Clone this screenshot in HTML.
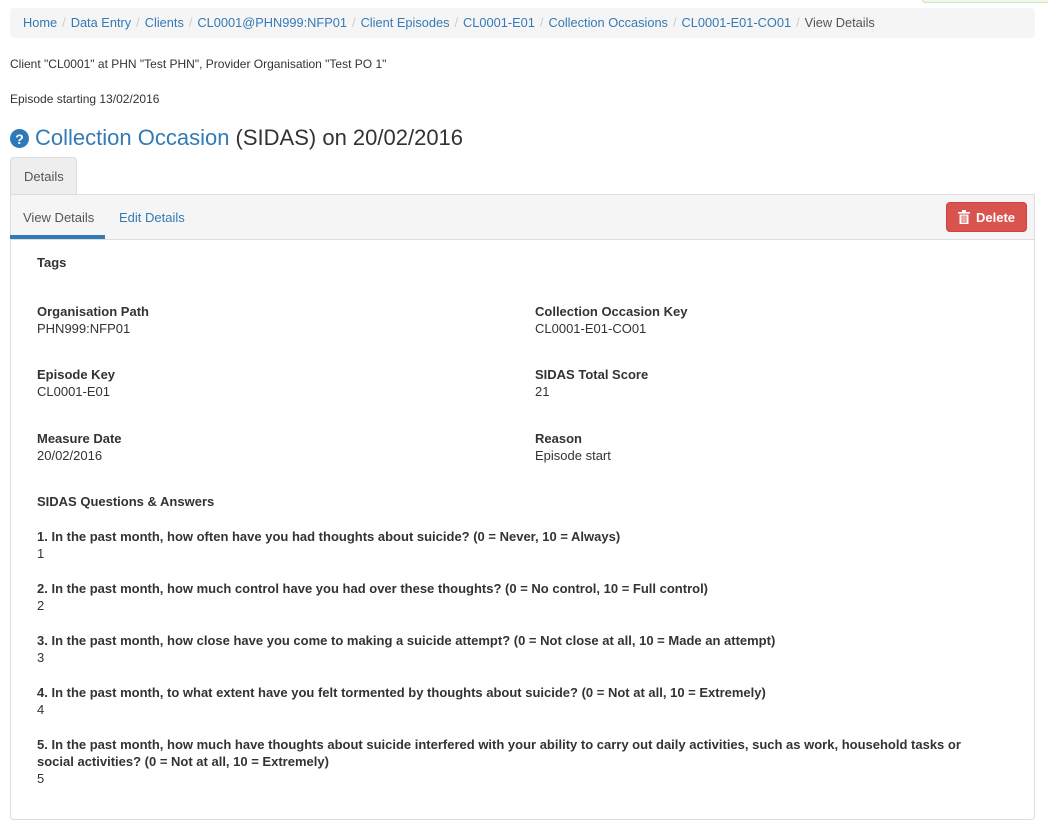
<!DOCTYPE html>
<html><head><meta charset="utf-8"><style>
*{box-sizing:border-box;margin:0;padding:0}
body{width:1048px;height:830px;background:#fff;font-family:"Liberation Sans",sans-serif;font-size:13px;color:#333;position:relative;overflow:hidden}
.a{position:absolute;white-space:nowrap}
.bc{left:10px;top:8px;width:1025px;height:30px;background:#f5f5f5;border-radius:4px;padding:7px 13px;font-size:12.8px;color:#555}
.bc a{color:#337ab7;text-decoration:none}
.bc .s{color:#ccc;padding:0 5px}
.green{left:922px;top:-4px;width:140px;height:7px;border:1px solid #cfe6bf;background:#eef7e8;border-radius:4px}
h1{font-weight:normal;font-size:22px;color:#333}
h1 span{color:#337ab7}
.q{left:10px;top:129px;width:19px;height:19px;border-radius:50%;background:#2e7ab8;color:#fff;font-weight:bold;font-size:14px;text-align:center;line-height:20px}
.tab{left:10px;top:157px;width:67px;height:38px;background:#eee;border:1px solid #ddd;border-bottom:none;border-radius:4px 4px 0 0;padding:11px 13px;color:#555}
.panel{left:10px;top:194px;width:1025px;height:626px;border:1px solid #ddd;border-radius:0 0 4px 4px}
.ph{left:11px;top:195px;width:1023px;height:45px;background:#f5f5f5;border-bottom:1px solid #ddd}
.ul{left:10px;top:235px;width:95px;height:4px;background:#337ab7}
.del{left:946px;top:202px;width:81px;height:30px;background:#d9534f;border:1px solid #d43f3a;border-radius:4px;color:#fff;font-weight:bold;padding:7px 0 0 11px;font-size:13px}
b{font-weight:bold;color:#333}
</style></head><body>
<div class="a green"></div>
<div class="a bc"><a>Home</a><span class="s">/</span><a>Data Entry</a><span class="s">/</span><a>Clients</a><span class="s">/</span><a>CL0001@PHN999:NFP01</a><span class="s">/</span><a>Client Episodes</a><span class="s">/</span><a>CL0001-E01</a><span class="s">/</span><a>Collection Occasions</a><span class="s">/</span><a>CL0001-E01-CO01</a><span class="s">/</span>View Details</div>
<div class="a" style="left:10px;top:57px;font-size:12px">Client "CL0001" at PHN "Test PHN", Provider Organisation "Test PO 1"</div>
<div class="a" style="left:10px;top:92px;font-size:12px">Episode starting 13/02/2016</div>
<div class="a q">?</div>
<h1 class="a" style="left:35px;top:125px"><span>Collection Occasion</span> (SIDAS) on 20/02/2016</h1>
<div class="a tab">Details</div>
<div class="a panel"></div>
<div class="a ph"></div>
<div class="a" style="left:23px;top:210px;color:#555">View Details</div>
<div class="a" style="left:119px;top:210px;color:#337ab7">Edit Details</div>
<div class="a ul"></div>
<div class="a del"><svg width="12" height="14" viewBox="0 0 12 14" style="vertical-align:-2px;margin-right:6px"><rect x="0" y="2" width="12" height="1.6" fill="#fff"/><rect x="4" y="0" width="4" height="2" fill="#fff"/><rect x="1.5" y="4.5" width="9" height="9.5" fill="#fff"/><rect x="3.6" y="5.5" width="1" height="7.5" fill="#d9534f"/><rect x="5.5" y="5.5" width="1" height="7.5" fill="#d9534f"/><rect x="7.4" y="5.5" width="1" height="7.5" fill="#d9534f"/></svg>Delete</div>
<div class="a" style="left:37px;top:255px"><b>Tags</b></div>
<div class="a" style="left:37px;top:303px;line-height:17px"><b>Organisation Path</b><br>PHN999:NFP01</div>
<div class="a" style="left:535px;top:303px;line-height:17px"><b>Collection Occasion Key</b><br>CL0001-E01-CO01</div>
<div class="a" style="left:37px;top:366px;line-height:17px"><b>Episode Key</b><br>CL0001-E01</div>
<div class="a" style="left:535px;top:366px;line-height:17px"><b>SIDAS Total Score</b><br>21</div>
<div class="a" style="left:37px;top:430px;line-height:17px"><b>Measure Date</b><br>20/02/2016</div>
<div class="a" style="left:535px;top:430px;line-height:17px"><b>Reason</b><br>Episode start</div>
<div class="a" style="left:37px;top:494px"><b>SIDAS Questions &amp; Answers</b></div>
<div class="a" style="left:37px;top:528px;line-height:17px"><b>1. In the past month, how often have you had thoughts about suicide? (0 = Never, 10 = Always)</b><br>1</div>
<div class="a" style="left:37px;top:580px;line-height:17px"><b>2. In the past month, how much control have you had over these thoughts? (0 = No control, 10 = Full control)</b><br>2</div>
<div class="a" style="left:37px;top:632px;line-height:17px"><b>3. In the past month, how close have you come to making a suicide attempt? (0 = Not close at all, 10 = Made an attempt)</b><br>3</div>
<div class="a" style="left:37px;top:684px;line-height:17px"><b>4. In the past month, to what extent have you felt tormented by thoughts about suicide? (0 = Not at all, 10 = Extremely)</b><br>4</div>
<div class="a" style="left:37px;top:736px;line-height:17px"><b>5. In the past month, how much have thoughts about suicide interfered with your ability to carry out daily activities, such as work, household tasks or<br>social activities? (0 = Not at all, 10 = Extremely)</b><br>5</div>
</body></html>
